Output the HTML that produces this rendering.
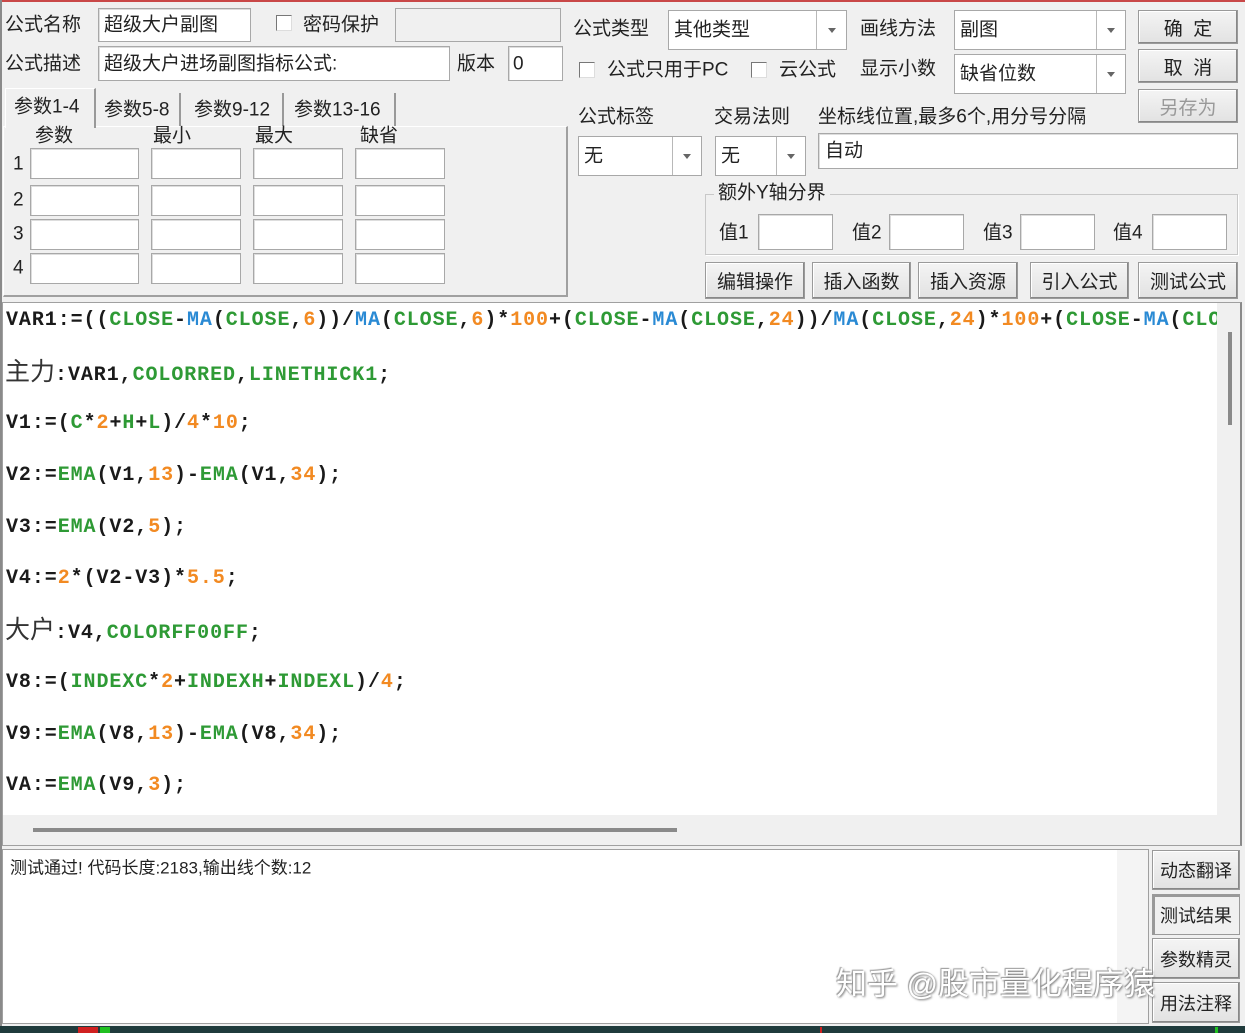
<!DOCTYPE html>
<html><head><meta charset="utf-8"><style>
*{margin:0;padding:0;box-sizing:border-box}
body{width:1245px;height:1033px;background:#f0f0f0;position:relative;overflow:hidden;font-family:"Liberation Sans","Noto Sans CJK SC",sans-serif;color:#222;font-size:19px}
.a{position:absolute}
.l{position:absolute;white-space:nowrap;line-height:1;transform:translateY(-50%)}
.in{position:absolute;background:#fff;border:1px solid #a8a8a8;box-shadow:inset 1px 1px 0 #ddd}
.sel{position:absolute;background:#fff;border:1px solid #a8a8a8}
.sel .t{position:absolute;left:5px;top:50%;transform:translateY(-50%);font-size:19px;line-height:1;white-space:nowrap}
.sel .d{position:absolute;top:0;bottom:0;right:0;border-left:1px solid #b8b8b8}
.sel .d:after{content:"";position:absolute;left:50%;top:50%;margin:-2px 0 0 -4px;border:4px solid transparent;border-top:5px solid #666;border-bottom:0}
.cb{position:absolute;width:16px;height:16px;background:#fff;border:1px solid #777;border-right-color:#ddd;border-bottom-color:#ddd}
.btn{position:absolute;background:linear-gradient(#f4f4f4,#e2e2e2);border:1px solid #9a9a9a;box-shadow:inset -1px -1px 0 #888,inset 1px 1px 0 #fff;display:flex;align-items:center;justify-content:center;font-size:19px;white-space:nowrap}
.code{position:absolute;left:6px;font-family:"Liberation Mono","Noto Sans CJK SC",monospace;font-weight:bold;font-size:20px;letter-spacing:0.92px;white-space:nowrap;line-height:1;transform:translateY(-50%);color:#1a1a1a}
.g{color:#2e9a35}.b{color:#2a8ad4}.o{color:#f28a22}
.cj{font-family:"Noto Sans CJK SC",sans-serif;font-weight:normal;font-size:25px;letter-spacing:0;color:#333}
</style></head><body>
<div class="a" style="left:0;top:0;width:1245px;height:2px;background:#c94848"></div>
<div class="a" style="left:0;top:0;width:2px;height:1030px;background:#8a8a8a"></div>

<div class="l" style="left:5px;top:25px">公式名称</div>
<div class="in" style="left:98px;top:8px;width:153px;height:34px"></div>
<div class="l" style="left:104px;top:25px">超级大户副图</div>
<div class="cb" style="left:276px;top:15px"></div>
<div class="l" style="left:303px;top:25px">密码保护</div>
<div class="a" style="left:395px;top:8px;width:166px;height:34px;background:#f0f0f0;border:1px solid #a8a8a8"></div>
<div class="l" style="left:5px;top:64px">公式描述</div>
<div class="in" style="left:98px;top:46px;width:352px;height:35px"></div>
<div class="l" style="left:104px;top:64px">超级大户进场副图指标公式:</div>
<div class="l" style="left:457px;top:64px">版本</div>
<div class="in" style="left:508px;top:46px;width:55px;height:35px"></div>
<div class="l" style="left:513px;top:64px">0</div>

<div class="a" style="left:3px;top:126px;width:565px;height:171px;border:1px solid #fff;border-right:2px solid #a0a0a0;border-bottom:2px solid #a0a0a0"></div>
<div class="a" style="left:5px;top:88px;width:91px;height:40px;background:#f0f0f0;border:1px solid #fff;border-right:2px solid #999;border-bottom:none"></div>
<div class="l" style="left:14px;top:107px;font-size:19px">参数1-4</div>
<div class="a" style="left:98px;top:93px;width:83px;height:33px;border-right:2px solid #999"></div>
<div class="l" style="left:104px;top:110px">参数5-8</div>
<div class="a" style="left:183px;top:93px;width:101px;height:33px;border-right:2px solid #999"></div>
<div class="l" style="left:194px;top:110px">参数9-12</div>
<div class="a" style="left:286px;top:93px;width:110px;height:33px;border-right:2px solid #999"></div>
<div class="l" style="left:294px;top:110px">参数13-16</div>
<div class="l" style="left:35px;top:136px">参数</div>
<div class="l" style="left:153px;top:136px">最小</div>
<div class="l" style="left:255px;top:136px">最大</div>
<div class="l" style="left:360px;top:136px">缺省</div>
<div class="l" style="left:13px;top:164px">1</div>
<div class="l" style="left:13px;top:200px">2</div>
<div class="l" style="left:13px;top:234px">3</div>
<div class="l" style="left:13px;top:268px">4</div>
<div class="in" style="left:30px;top:148px;width:109px;height:31px"></div><div class="in" style="left:151px;top:148px;width:90px;height:31px"></div><div class="in" style="left:253px;top:148px;width:90px;height:31px"></div><div class="in" style="left:355px;top:148px;width:90px;height:31px"></div>
<div class="in" style="left:30px;top:185px;width:109px;height:31px"></div><div class="in" style="left:151px;top:185px;width:90px;height:31px"></div><div class="in" style="left:253px;top:185px;width:90px;height:31px"></div><div class="in" style="left:355px;top:185px;width:90px;height:31px"></div>
<div class="in" style="left:30px;top:219px;width:109px;height:31px"></div><div class="in" style="left:151px;top:219px;width:90px;height:31px"></div><div class="in" style="left:253px;top:219px;width:90px;height:31px"></div><div class="in" style="left:355px;top:219px;width:90px;height:31px"></div>
<div class="in" style="left:30px;top:253px;width:109px;height:31px"></div><div class="in" style="left:151px;top:253px;width:90px;height:31px"></div><div class="in" style="left:253px;top:253px;width:90px;height:31px"></div><div class="in" style="left:355px;top:253px;width:90px;height:31px"></div>

<div class="l" style="left:573px;top:29px">公式类型</div>
<div class="sel" style="left:668px;top:10px;width:179px;height:40px"><span class="t">其他类型</span><span class="d" style="width:30px"></span></div>
<div class="l" style="left:860px;top:29px">画线方法</div>
<div class="sel" style="left:954px;top:10px;width:172px;height:40px"><span class="t">副图</span><span class="d" style="width:29px"></span></div>
<div class="btn" style="left:1138px;top:10px;width:100px;height:34px">确&nbsp;&nbsp;定</div>
<div class="btn" style="left:1138px;top:49px;width:100px;height:34px">取&nbsp;&nbsp;消</div>
<div class="btn" style="left:1138px;top:89px;width:100px;height:34px;color:#999">另存为</div>
<div class="cb" style="left:579px;top:62px"></div>
<div class="l" style="left:607px;top:70px">公式只用于PC</div>
<div class="cb" style="left:751px;top:62px"></div>
<div class="l" style="left:779px;top:70px">云公式</div>
<div class="l" style="left:860px;top:69px">显示小数</div>
<div class="sel" style="left:954px;top:54px;width:172px;height:40px"><span class="t">缺省位数</span><span class="d" style="width:29px"></span></div>
<div class="l" style="left:578px;top:117px">公式标签</div>
<div class="l" style="left:714px;top:117px">交易法则</div>
<div class="l" style="left:818px;top:117px">坐标线位置,最多6个,用分号分隔</div>
<div class="sel" style="left:578px;top:136px;width:124px;height:40px"><span class="t">无</span><span class="d" style="width:29px"></span></div>
<div class="sel" style="left:715px;top:136px;width:91px;height:40px"><span class="t">无</span><span class="d" style="width:29px"></span></div>
<div class="in" style="left:818px;top:133px;width:420px;height:36px"></div>
<div class="l" style="left:825px;top:151px">自动</div>
<div class="a" style="left:705px;top:194px;width:533px;height:61px;border:1px solid #c8c8c8;box-shadow:1px 1px 0 #fff"></div>
<div class="l" style="left:714px;top:193px;background:#f0f0f0;padding:0 4px">额外Y轴分界</div>
<div class="l" style="left:719px;top:233px">值1</div><div class="in" style="left:758px;top:214px;width:75px;height:36px"></div>
<div class="l" style="left:852px;top:233px">值2</div><div class="in" style="left:889px;top:214px;width:75px;height:36px"></div>
<div class="l" style="left:983px;top:233px">值3</div><div class="in" style="left:1020px;top:214px;width:75px;height:36px"></div>
<div class="l" style="left:1113px;top:233px">值4</div><div class="in" style="left:1152px;top:214px;width:75px;height:36px"></div>
<div class="btn" style="left:705px;top:262px;width:100px;height:37px">编辑操作</div>
<div class="btn" style="left:812px;top:262px;width:99px;height:37px">插入函数</div>
<div class="btn" style="left:918px;top:262px;width:100px;height:37px">插入资源</div>
<div class="btn" style="left:1030px;top:262px;width:99px;height:37px">引入公式</div>
<div class="btn" style="left:1138px;top:262px;width:100px;height:37px">测试公式</div>

<div class="a" style="left:2px;top:302px;width:1240px;height:544px;border:1px solid #a0a0a0;border-right:2px solid #8a8a8a;background:#f0f0f0"></div>
<div class="a" style="left:3px;top:303px;width:1214px;height:512px;background:#fff"></div>
<div class="a" style="left:1228px;top:332px;width:4px;height:93px;background:#8a8a8a"></div>
<div class="a" style="left:33px;top:828px;width:644px;height:4px;background:#8a8a8a"></div>
<div class="a" style="left:3px;top:303px;width:1214px;height:512px;overflow:hidden">
<div class="code" style="left:3px;top:18px">VAR1:=((<span class="g">CLOSE</span>-<span class="b">MA</span>(<span class="g">CLOSE</span>,<span class="o">6</span>))/<span class="b">MA</span>(<span class="g">CLOSE</span>,<span class="o">6</span>)*<span class="o">100</span>+(<span class="g">CLOSE</span>-<span class="b">MA</span>(<span class="g">CLOSE</span>,<span class="o">24</span>))/<span class="b">MA</span>(<span class="g">CLOSE</span>,<span class="o">24</span>)*<span class="o">100</span>+(<span class="g">CLOSE</span>-<span class="b">MA</span>(<span class="g">CLOSE</span>,<span class="o">24</span>))</div>
<div class="code" style="left:2px;top:69px"><span class="cj">主力</span>:VAR1,<span class="g">COLORRED</span>,<span class="g">LINETHICK1</span>;</div>
<div class="code" style="left:3px;top:121px">V1:=(<span class="g">C</span>*<span class="o">2</span>+<span class="g">H</span>+<span class="g">L</span>)/<span class="o">4</span>*<span class="o">10</span>;</div>
<div class="code" style="left:3px;top:173px">V2:=<span class="g">EMA</span>(V1,<span class="o">13</span>)-<span class="g">EMA</span>(V1,<span class="o">34</span>);</div>
<div class="code" style="left:3px;top:225px">V3:=<span class="g">EMA</span>(V2,<span class="o">5</span>);</div>
<div class="code" style="left:3px;top:276px">V4:=<span class="o">2</span>*(V2-V3)*<span class="o">5.5</span>;</div>
<div class="code" style="left:2px;top:327px"><span class="cj">大户</span>:V4,<span class="g">COLORFF00FF</span>;</div>
<div class="code" style="left:3px;top:380px">V8:=(<span class="g">INDEXC</span>*<span class="o">2</span>+<span class="g">INDEXH</span>+<span class="g">INDEXL</span>)/<span class="o">4</span>;</div>
<div class="code" style="left:3px;top:432px">V9:=<span class="g">EMA</span>(V8,<span class="o">13</span>)-<span class="g">EMA</span>(V8,<span class="o">34</span>);</div>
<div class="code" style="left:3px;top:483px">VA:=<span class="g">EMA</span>(V9,<span class="o">3</span>);</div>
</div>

<div class="a" style="left:2px;top:849px;width:1147px;height:175px;border:1px solid #a0a0a0;background:#f4f4f4"></div>
<div class="a" style="left:3px;top:850px;width:1114px;height:173px;background:#fff"></div>
<div class="l" style="left:10px;top:868px;font-size:17px">测试通过! 代码长度:2183,输出线个数:12</div>
<div class="btn" style="left:1152px;top:850px;width:88px;height:40px;font-size:18px">动态翻译</div>
<div class="btn" style="left:1152px;top:894px;width:88px;height:41px;font-size:18px;background:#f0f0f0;box-shadow:inset 2px 2px 0 #999">测试结果</div>
<div class="btn" style="left:1152px;top:938px;width:88px;height:41px;font-size:18px">参数精灵</div>
<div class="btn" style="left:1152px;top:982px;width:88px;height:41px;font-size:18px">用法注释</div>
<div class="l" style="left:836px;top:984px;font-size:31px;color:#fff;text-shadow:1px 1px 2px #777,-1px -1px 1px #999;letter-spacing:0">知乎 @股市量化程序猿</div>

<div class="a" style="left:0;top:1026px;width:1245px;height:7px;background:#1f3b3c"></div>
<div class="a" style="left:78px;top:1027px;width:20px;height:6px;background:#d02020"></div>
<div class="a" style="left:100px;top:1027px;width:10px;height:6px;background:#20c020"></div>
<div class="a" style="left:820px;top:1027px;width:2px;height:6px;background:#d02020"></div>
<div class="a" style="left:1215px;top:1027px;width:3px;height:6px;background:#20c020"></div>
</body></html>
